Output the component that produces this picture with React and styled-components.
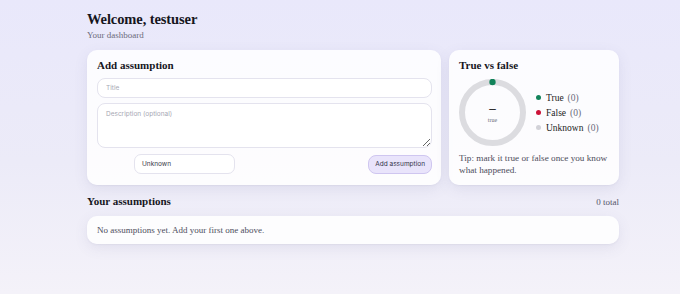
import React from 'react';
import styled, { createGlobalStyle } from 'styled-components';

const GlobalStyle = createGlobalStyle`
  * { box-sizing: border-box; }
  html, body { margin: 0; padding: 0; }
  body {
    min-height: 294px;
    background: linear-gradient(180deg, #e9e8fb 0%, #ecebf8 55%, #f4f2f9 100%);
    font-family: "Liberation Serif", "Times New Roman", serif;
    color: #16161d;
  }
`;

const Page = styled.div`
  width: 532px;
  margin-left: 87px;
  padding-top: 10px;
  padding-bottom: 40px;
`;

const Welcome = styled.h1`
  margin: 0;
  font-size: 14.5px;
  line-height: 18px;
  font-weight: 700;
  letter-spacing: -0.1px;
`;

const Sub = styled.div`
  font-size: 9px;
  line-height: 14px;
  color: #6b6b7b;
`;

const Grid = styled.div`
  display: grid;
  grid-template-columns: 354px 170px;
  gap: 8px;
  margin-top: 8px;
`;

const Card = styled.div`
  background: rgba(255, 255, 255, 0.86);
  border-radius: 10px;
  box-shadow: 0 4px 14px rgba(90, 90, 140, 0.10), 0 1px 2px rgba(90, 90, 140, 0.06);
  padding: ${(p) => p.$pad || '8px 9px 9px 10px'};
  display: flex;
  flex-direction: column;
`;

const CardTitle = styled.h2`
  margin: 0;
  font-size: 11px;
  line-height: 14px;
  font-weight: 700;
`;

const Input = styled.input`
  margin-top: ${(p) => p.$mt || '5px'};
  height: 20px;
  width: 100%;
  border: 1px solid #e4e3ee;
  border-radius: 8px;
  background: #fff;
  padding: 0 8px;
  font-family: "Inter", "Liberation Sans", sans-serif;
  font-size: 6.5px;
  color: #333;
  outline: none;
  &::placeholder { color: #a7a7b3; }
`;

const TextArea = styled.textarea`
  display: block;
  margin-top: 5px;
  height: 45px;
  width: 100%;
  border: 1px solid #e4e3ee;
  border-radius: 8px;
  background: #fff;
  padding: 6px 8px;
  font-family: "Inter", "Liberation Sans", sans-serif;
  font-size: 6.5px;
  resize: vertical;
  outline: none;
  &::placeholder { color: #a7a7b3; }
`;

const Row = styled.div`
  margin-top: 6px;
  display: flex;
  align-items: center;
  justify-content: space-between;
`;

const Select = styled.div`
  margin-left: 37px;
  width: 101px;
  height: 20px;
  border: 1px solid #e4e3ee;
  border-radius: 7px;
  background: #fff;
  display: flex;
  align-items: center;
  padding: 0 7px;
  font-family: "Inter", "Liberation Sans", sans-serif;
  font-size: 6.5px;
  color: #3a3a48;
`;

const Button = styled.button`
  height: 19px;
  padding: 0 6px;
  border: 1px solid #cfc6f0;
  border-radius: 8px;
  background: #e9e4fb;
  font-family: "Inter", "Liberation Sans", sans-serif;
  font-size: 6.5px;
  color: #33334a;
`;

const ChartRow = styled.div`
  margin-top: 7px;
  display: flex;
  align-items: center;
  gap: 10px;
`;

const Donut = styled.div`
  position: relative;
  width: 67px;
  height: 67px;
  flex-shrink: 0;
`;

const DonutCenter = styled.div`
  position: absolute;
  inset: 0;
  display: flex;
  flex-direction: column;
  align-items: center;
  justify-content: center;
`;

const Dash = styled.div`
  font-size: 13px;
  line-height: 12px;
  font-weight: 700;
  color: #222;
`;

const DonutLabel = styled.div`
  margin-top: 3px;
  font-size: 6px;
  color: #6b6b7b;
`;

const Legend = styled.div`
  display: flex;
  flex-direction: column;
  gap: 3px;
  margin-top: 0;
`;

const LegendItem = styled.div`
  display: flex;
  align-items: center;
  font-size: 9.5px;
  line-height: 12px;
  font-weight: 400;
  color: #222;
`;

const Dot = styled.span`
  width: 5px;
  height: 5px;
  border-radius: 50%;
  background: ${(p) => p.$c};
  margin-right: 5px;
`;

const Count = styled.span`
  margin-left: 4px;
  color: #6b6b7b;
`;

const Tip = styled.p`
  margin: 6px 0 0;
  font-size: 9.2px;
  line-height: 12px;
  color: #4d4d5c;
`;

const SectionHead = styled.div`
  margin-top: 9px;
  display: flex;
  justify-content: space-between;
  align-items: baseline;
`;

const SectionTitle = styled.h3`
  margin: 0;
  font-size: 11px;
  line-height: 14px;
  font-weight: 700;
`;

const Total = styled.span`
  font-size: 9px;
  color: #55556a;
`;

const EmptyCard = styled(Card)`
  margin-top: 8px;
  height: 28px;
  justify-content: center;
  font-size: 9px;
  color: #4d4d5c;
`;

const legend = [
  { label: 'True', color: '#12835a' },
  { label: 'False', color: '#cc1238' },
  { label: 'Unknown', color: '#d2d2d8' },
];

const App = () => {
  return (
    <>
      <GlobalStyle />
      <Page>
        <Welcome>Welcome, testuser</Welcome>
        <Sub>Your dashboard</Sub>
        <Grid>
          <Card>
            <CardTitle>Add assumption</CardTitle>
            <Input $mt="6px" placeholder="Title" />
            <TextArea placeholder="Description (optional)" />
            <Row>
              <Select>Unknown</Select>
              <Button>Add assumption</Button>
            </Row>
          </Card>
          <Card $pad="8px 7px 9px 10px">
            <CardTitle>True vs false</CardTitle>
            <ChartRow>
              <Donut>
                <svg width="67" height="67" viewBox="0 0 67 67">
                  <circle cx="33.5" cy="33.5" r="30.5" fill="none" stroke="#dcdce0" strokeWidth="6" />
                  <circle cx="33.5" cy="3" r="3.2" fill="#12835a" />
                </svg>
                <DonutCenter>
                  <Dash>–</Dash>
                  <DonutLabel>true</DonutLabel>
                </DonutCenter>
              </Donut>
              <Legend>
                {legend.map((l) => (
                  <LegendItem key={l.label}>
                    <Dot $c={l.color} />
                    {l.label}
                    <Count>(0)</Count>
                  </LegendItem>
                ))}
              </Legend>
            </ChartRow>
            <Tip>Tip: mark it true or false once you know what happened.</Tip>
          </Card>
        </Grid>
        <SectionHead>
          <SectionTitle>Your assumptions</SectionTitle>
          <Total>0 total</Total>
        </SectionHead>
        <EmptyCard $pad="0 10px">No assumptions yet. Add your first one above.</EmptyCard>
      </Page>
    </>
  );
};

export default App;
